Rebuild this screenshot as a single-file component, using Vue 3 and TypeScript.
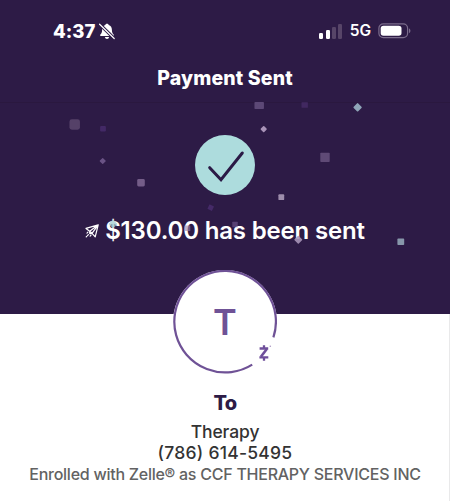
<template>
  <div class="screen">
    <header class="hero">
      <div class="status-bar">
        <div class="status-left">
          <span class="time">4:37</span>
          <svg class="bell" viewBox="0 0 16 17">
            <path d="M8 .7c.9 0 1.500.5 1.700 1.200 2.200.7 3.200 2.500 3.200 4.800 0 3 .7 3.700 1.700 4.800.6.800.200 1.500-.700 1.500H2.100c-.9 0-1.300-.7-.7-1.500 1-1.100 1.700-1.800 1.700-4.800 0-2.300 1-4.100 3.200-4.800C6.500 1.200 7.100.7 8 .7z" fill="#fff" />
            <path d="M5.900 14h4.200c-.2 1.300-1 2-2.100 2s-1.900-.7-2.100-2z" fill="#fff" />
            <path d="M.6 1.200l14.600 14.300" stroke="#2d1b46" stroke-width="3.200" />
            <path d="M.6 1.200l14.600 14.300" stroke="#fff" stroke-width="1.200" stroke-linecap="round" />
          </svg>
        </div>
        <div class="status-right">
          <div class="signal">
            <i v-for="(bar, i) in bars" :key="i" :class="{ weak: !bar.on }" :style="{ height: `${bar.h}px` }"></i>
          </div>
          <span class="network">5G</span>
          <svg class="battery" viewBox="0 0 34 16">
            <rect x=".9" y=".9" width="28.700" height="13.700" rx="4.400" fill="none" stroke="#7b6c8c" stroke-width="1.200" />
            <rect x="2.700" y="2.700" width="20.800" height="10.100" rx="2.800" fill="#fff" />
            <path d="M31 5.400c1.900.6 1.900 4.100 0 4.700z" fill="#7b6c8c" />
          </svg>
        </div>
      </div>
      <h1 class="title">Payment Sent</h1>
      <svg class="check" viewBox="0 0 60 60">
        <circle cx="30" cy="30" r="30" fill="#addcdd" />
        <path d="M14.700 32.700L26 44.800 47.300 18" fill="none" stroke="#2b1a46" stroke-width="3" stroke-linecap="round" />
      </svg>
      <div class="message">
        <svg class="plane" viewBox="0 0 14 14" fill="none" stroke="#fff" stroke-width="1.200" stroke-linejoin="round" stroke-linecap="round">
          <path d="M13.200.8L1 4.400l3.700 2.800 2.300 2.100 3.200 3.600zM13.200.8L4.700 7.200M13.200.8L7 9.300M4.700 7.200v2.400H7" />
          <path d="M2.900 8.200l-1.700 1.700M3.400 10.700l-2.200 2.200M6 11.200l-1.500 1.600" stroke-dasharray="1.300 1.200" />
        </svg>
        <span class="message-text">$130.00 has been sent</span>
      </div>
      <svg class="confetti" viewBox="0 0 450 314">
        <rect
          v-for="(c, i) in confetti"
          :key="i"
          :x="c.x - c.w / 2"
          :y="c.y - c.h / 2"
          :width="c.w"
          :height="c.h"
          :rx="c.r"
          :fill="c.fill"
          :opacity="c.o ?? 1"
          :transform="`rotate(${c.rot} ${c.x} ${c.y})`"
        />
      </svg>
    </header>

    <main class="recipient">
      <div class="avatar">
        <svg class="ring" viewBox="0 0 104 104">
          <circle cx="52" cy="52" r="52" fill="#fff" />
          <path d="M79.200 94.600A50.800 50.800 0 1 1 100.400 67.400" fill="none" stroke="#6f5296" stroke-width="2.200" />
          <g fill="none" stroke="#6f4f9b" stroke-width="2.300">
            <path d="M86.600 78.500h8.600M86.400 87.300h8.900" />
            <path d="M93.800 79l-5.900 7.800" stroke-width="2.600" />
            <path d="M91 75.200v3M91 87.500v3.200" />
          </g>
          <circle cx="97.300" cy="76.300" r=".8" fill="#a995c0" />
        </svg>
        <span class="initial">T</span>
      </div>
      <h2 class="to">To</h2>
      <div class="name">Therapy</div>
      <div class="phone">(786) 614-5495</div>
      <div class="enrolled">Enrolled with Zelle® as CCF THERAPY SERVICES INC</div>
    </main>
  </div>
</template>

<script setup lang="ts">
interface Piece {
  x: number
  y: number
  w: number
  h: number
  r: number
  rot: number
  fill: string
  o?: number
}

const bars = [
  { h: 6, on: true },
  { h: 9, on: true },
  { h: 11.5, on: false },
  { h: 15, on: false },
]

const confetti: Piece[] = [
  { x: 74.7, y: 124.5, w: 10.5, h: 10.5, r: 2.4, rot: 0, fill: '#554168' },
  { x: 103, y: 128.7, w: 5.8, h: 5.5, r: 1, rot: 0, fill: '#432966' },
  { x: 102.7, y: 161, w: 4.6, h: 4.6, r: 0.6, rot: 45, fill: '#6a5385' },
  { x: 141, y: 182.8, w: 7.6, h: 7.4, r: 1.4, rot: 0, fill: '#745d88' },
  { x: 259.2, y: 105.5, w: 9.5, h: 7, r: 0.8, rot: 0, fill: '#5c4876' },
  { x: 304.7, y: 105, w: 6.4, h: 5.5, r: 0.6, rot: 0, fill: '#412860' },
  { x: 357.6, y: 107.3, w: 6.4, h: 6.4, r: 0.9, rot: 45, fill: '#8fa5b8' },
  { x: 263.7, y: 129.1, w: 4.8, h: 4.8, r: 0.8, rot: 45, fill: '#a993b8' },
  { x: 325, y: 157.4, w: 9.4, h: 9.4, r: 0.8, rot: 0, fill: '#5f4a76' },
  { x: 281.3, y: 197.2, w: 5.8, h: 5.8, r: 0.9, rot: 0, fill: '#9d8dab' },
  { x: 210.7, y: 207.7, w: 5, h: 5, r: 0.5, rot: 25, fill: '#452a68' },
  { x: 113, y: 224, w: 6.4, h: 6.4, r: 0.8, rot: 45, fill: '#a2cbd0', o: 0.75 },
  { x: 187.3, y: 228.3, w: 6, h: 5.6, r: 0.6, rot: 0, fill: '#9884ae', o: 0.6 },
  { x: 235, y: 224.5, w: 5.4, h: 5.4, r: 0.5, rot: 0, fill: '#745b91', o: 0.6 },
  { x: 298.3, y: 239.7, w: 6, h: 6, r: 0.7, rot: 45, fill: '#a795b8', o: 0.9 },
  { x: 400.8, y: 241.8, w: 6.8, h: 6.4, r: 0.8, rot: 0, fill: '#8797aa' },
]
</script>

<style>
html, body { margin: 0; background: #fff; }
</style>

<style scoped>
.screen {
  width: 450px;
  height: 501px;
  overflow: hidden;
  display: flex;
  flex-direction: column;
  background: #fff;
  font-family: Inter, "Liberation Sans", sans-serif;
}
.hero {
  position: relative;
  height: 314px;
  flex: none;
  display: flex;
  flex-direction: column;
  align-items: center;
  background: linear-gradient(#2d1b46 102px, #2a183f 102px, #2a183f 103px, #2d1b46 103px);
  color: #fff;
}
.status-bar {
  width: 100%;
  height: 62px;
  box-sizing: border-box;
  padding: 0 38px 0 53px;
  display: flex;
  justify-content: space-between;
  align-items: center;
}
.status-left, .status-right { display: flex; align-items: center; }
.time { font-size: 18.5px; font-weight: 800; line-height: 22px; letter-spacing: 0.05px; }
.bell { width: 16px; height: 17px; margin-left: 4px; }
.signal { display: flex; align-items: flex-end; gap: 2.3px; height: 15px; }
.signal i { width: 4px; border-radius: 1.2px; background: #fff; }
.signal i.weak { background: #574568; }
.network { margin-left: 7.5px; font-size: 15.5px; font-weight: 600; line-height: 20px; letter-spacing: -0.1px; }
.battery { width: 34px; height: 16px; margin-left: 7px; }
.title { margin: 4px 0 0; height: 25px; font-size: 19.5px; font-weight: 800; line-height: 25px; letter-spacing: 0.15px; }
.check { width: 60px; height: 60px; margin-top: 44px; }
.message { display: flex; align-items: center; height: 32px; margin-top: 20px; white-space: nowrap; }
.plane { width: 14px; height: 14px; margin-right: 6px; }
.message-text { font-size: 24px; font-weight: 600; line-height: 32px; letter-spacing: -0.17px; }
.confetti { position: absolute; left: 0; top: 0; width: 450px; height: 314px; pointer-events: none; }
.recipient {
  flex: 1;
  display: flex;
  flex-direction: column;
  align-items: center;
  border-right: 1px solid #e9e9ea;
  padding-left: 1px;
  text-align: center;
  white-space: nowrap;
}
.avatar { position: relative; width: 104px; height: 104px; margin-top: -44px; display: grid; place-items: center; }
.ring { position: absolute; inset: 0; width: 104px; height: 104px; }
.initial { position: relative; font-size: 36px; font-weight: 600; line-height: 40px; color: #6f5296; }
.to { margin: 17px 0 0; font-size: 20px; font-weight: 800; line-height: 25px; letter-spacing: -0.6px; color: #2d1b46; }
.name { margin-top: 5px; font-size: 17.5px; font-weight: 500; line-height: 21px; letter-spacing: -0.1px; color: #333; }
.phone { font-size: 17.5px; font-weight: 500; line-height: 21px; letter-spacing: 0.25px; color: #333; }
.enrolled { margin-top: 1px; font-size: 16px; font-weight: 500; line-height: 21px; letter-spacing: -0.25px; color: #626262; }
</style>
